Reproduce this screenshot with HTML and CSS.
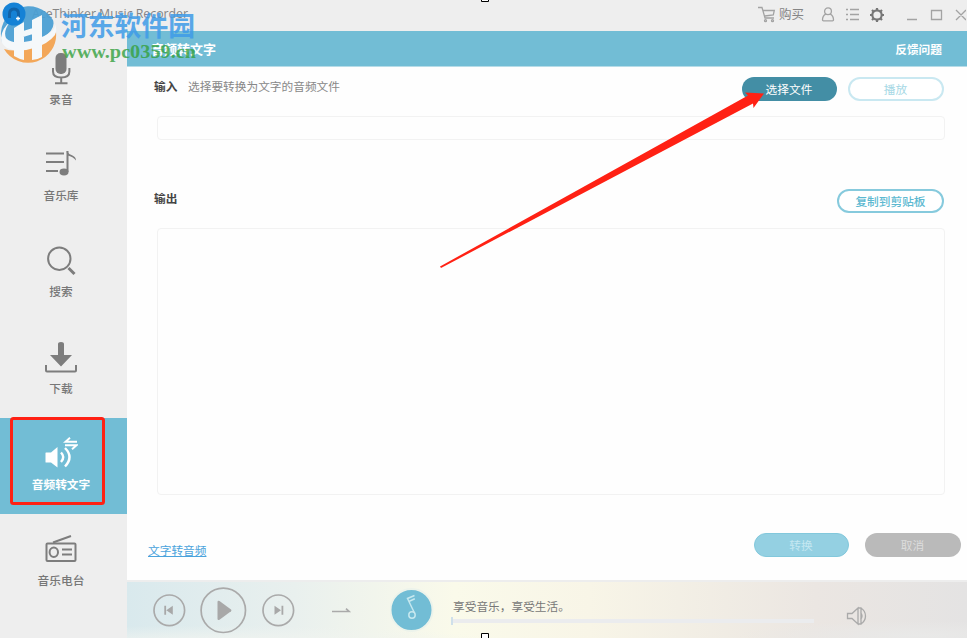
FILE: index.html
```
<!DOCTYPE html>
<html lang="zh-CN">
<head>
<meta charset="utf-8">
<title>AceThinker Music Recorder</title>
<link rel="stylesheet" href="styles.css">
</head>
<body>
<div class="app">
  <header class="titlebar">
    <span class="app-name">AceThinker Music Recorder</span>
    <div class="tools">
      <svg class="cart" width="18" height="17" viewBox="0 0 18 17"><path d="M0 1.500h4L7 12h9M5.300 4.500h11l-1 4.500-8.500 1"/><circle cx="7.500" cy="14.700" r="1"/><circle cx="14.500" cy="14.700" r="1"/></svg>
      <span class="buy">购买</span>
      <svg class="user" width="14" height="15" viewBox="0 0 14 15"><circle cx="7" cy="4.300" r="3.400"/><path d="M4.800 7.200C2.500 8.300 1.500 10 1.500 13q0 .8 1 .8h9q1 0 1-.8c0-3-1-4.700-3.300-5.800"/></svg>
      <svg class="list" width="15" height="13" viewBox="0 0 15 13"><path d="M1 1.500h2M5 1.500h9M1 6.500h2M5 6.500h9M1 11.500h2M5 11.500h9"/></svg>
      <svg class="gear" width="16" height="16" viewBox="0 0 16 16"><circle cx="8" cy="8" r="4.700"/><path d="M8 1v2M8 13v2M1 8h2M13 8h2M3 3l1.500 1.500M11.500 11.500L13 13M3 13l1.500-1.500M11.500 4.500L13 3"/></svg>
      <svg class="win" width="60" height="14" viewBox="0 0 60 14"><path d="M1 11.500h10M25.500 2.500h10v9h-10zM50 2l10 10M60 2L50 12"/></svg>
    </div>
  </header>
  <div class="body">
    <nav class="sidebar">
      <a class="item"><svg width="34" height="34" viewBox="0 0 34 34"><rect class="fill" x="11.500" y="1" width="11" height="21" rx="5"/><path d="M9 16v3.500q0 6 8.200 6t8.200-6V16M17.200 26v5M11 31.300h12.500"/></svg><span>录音</span></a>
      <a class="item"><svg width="34" height="34" viewBox="0 0 34 34"><path d="M2 5.500h18M2 14h18M2 23h12"/><ellipse class="fill" cx="20" cy="24" rx="4.500" ry="3.400"/><path d="M23.500 24V3"/><path class="fill" d="M22.500 3q2 3 6 4.500 3.500 1.500 3.500 5-3-4-8.500-5z"/></svg><span>音乐库</span></a>
      <a class="item"><svg width="34" height="34" viewBox="0 0 34 34"><circle cx="15.300" cy="14.700" r="11.200"/><path class="handle" d="M24.500 24l6 6"/></svg><span>搜索</span></a>
      <a class="item"><svg width="34" height="34" viewBox="0 0 34 34"><path class="fill" d="M14 3q0-2 3-2t3 2v11h8L17 25.500 6 14h8z"/><path d="M2 24v5.500q0 1 1 1h28q1 0 1-1V24"/></svg><span>下载</span></a>
      <a class="item active"><svg width="34" height="34" viewBox="0 0 34 34"><path class="fill" d="M2 15.500h5L13.500 10v20.500L7 25.500H2q-.5 0-.5-.5v-9q0-.5.500-.5z"/><path d="M17 15.500q4.500 4.500 0 9.500M21 11q9 9 0 18.500"/><path class="swap" d="M33 4.700H21.500l4.500-4M21 8.200h11.500l-4.500 4"/></svg><span>音频转文字</span></a>
      <a class="item"><svg width="34" height="34" viewBox="0 0 34 34"><rect x="2.500" y="10.500" width="29" height="17.500" rx="1"/><ellipse cx="9.800" cy="19.300" rx="4.200" ry="4.700"/><path d="M18 16.500h10M18 21.500h10M9 9.500L27 3"/></svg><span>音乐电台</span></a>
    </nav>
    <main class="main">
      <div class="heading"><span>音频转文字</span><span>反馈问题</span></div>
      <section class="content">
        <div class="row first">
          <b>输入</b><span class="hint">选择要转换为文字的音频文件</span>
          <button class="btn dark">选择文件</button>
          <button class="btn outline pale">播放</button>
        </div>
        <div class="field input"></div>
        <div class="row second">
          <b>输出</b>
          <button class="btn outline copy">复制到剪贴板</button>
        </div>
        <div class="field output"></div>
        <div class="row actions">
          <a class="link">文字转音频</a>
          <button class="btn convert">转换</button>
          <button class="btn cancel">取消</button>
        </div>
      </section>
      <footer class="player">
        <svg class="controls" width="240" height="56" viewBox="0 0 240 56">
          <circle cx="42.300" cy="28.300" r="15.300"/><path class="g" d="M37.300 23.800h1.800v9h-1.800zM39.300 28.300l6.500-4.500v9z"/>
          <circle cx="96.300" cy="28.300" r="22.200"/><path class="g" d="M90.500 20q0-2 2-1l11.500 8.500q1 .8 0 1.800l-11.500 8.500q-2 .8-2-1z"/>
          <circle cx="151.300" cy="28.300" r="15.300"/><path class="g" d="M154.500 23.800h1.800v9h-1.800zM154 28.300l-6.500-4.500v9z"/>
          <path d="M205 29.500h17l-3-2.800"/>
        </svg>
        <svg class="disc" width="44" height="44" viewBox="0 0 44 44"><circle cx="21.500" cy="22" r="21"/><circle cx="22" cy="27" r="3.200"/><path d="M24.500 25L17.500 10.500l7-3M18.800 13.500l6-2.700"/></svg>
        <div class="track"><span>享受音乐，享受生活。</span><div class="progress"></div></div>
        <svg class="volume" width="22" height="20" viewBox="0 0 22 20"><path d="M1.500 7.500H6l6-5.500v16l-6-5.500H1.500zM14.500 1.700q5 3 5 8.300t-5 8.300M14.500 6.500q3 3.500 0 7M12 2h3v16h-3"/></svg>
      </footer>
    </main>
  </div>
  <svg class="annotations" width="967" height="638" viewBox="0 0 967 638">
    <g opacity=".93">
      <path d="M4 49Q28 56 56 32A28 28 0 0 1 4 49z" fill="#f4a24e"/>
      <path d="M2 42A28 28 0 0 1 53 20Q56 30 42 38 22 48 8 43 4 42 2 38z" fill="#4a9fd4"/>
      <path d="M1 38Q2 28 10 22 3 31 6 38 12 45 30 41 46 37 53 30 56 27 54 22 58 29 55 35 48 44 34 48 18 53 7 48 1 44 1 38z" fill="#f6f9fb"/>
      <path d="M14 28l10-6v38q-5-1-10-4zM32 20l10-5v42q-5 3-10 3zM20 32l16-5v6l-16 5z" fill="#f6f9fb"/>
    </g>
    <circle cx="14" cy="14" r="11.500" fill="#1582d6"/>
    <path d="M9.500 18v-4q0-5 4.500-5t4.500 5v3" fill="none" stroke="#1263a8" stroke-width="3"/>
    <path d="M16 18.500h4M18 16.500v4" stroke="#fff" stroke-width="1.300"/>
    <text class="site-name" x="61" y="35.500" textLength="134" lengthAdjust="spacingAndGlyphs">河东软件园</text>
    <text class="site-url" x="62" y="58" textLength="134" lengthAdjust="spacingAndGlyphs">www.pc0359.cn</text>
    <rect x="11.500" y="418.500" width="92" height="85" rx="2" fill="none" stroke="#ff2114" stroke-width="3"/>
    <path d="M440 266.500L748 95.500 745 92.500 764 93.500 753.500 108 753 103.500 441 268z" fill="#ff2114"/>
    <path d="M481.500-5.500h7v7h-7zM481.500 633.500h7v7h-7z" fill="#fff" stroke="#000"/>
  </svg>
</div>
</body>
</html>
```
FILE: styles.css
```
* { box-sizing: border-box; }
body { margin: 0; overflow: hidden; font-family: "Noto Sans CJK SC", sans-serif; font-size: 11.700px; color: #777; }
svg { fill: none; stroke: #808080; flex: none; }
.app { position: relative; width: 967px; height: 638px; display: flex; flex-direction: column; background: #fefefe; overflow: hidden; }
.titlebar { height: 31px; flex: none; background: #eee; display: flex; align-items: center; padding: 0 0 2px 32px; }
.app-name { font: 12.300px/26px "Open Sans", sans-serif; color: #858585; margin-top: -1px; }
.tools { margin-left: auto; display: flex; align-items: center; }
.tools svg { stroke: #a3a3a3; stroke-width: 1.300; }
.buy { margin: -2px 17px 0 3px; font-size: 12.500px; color: #858585; }
.tools .list { margin: 0 9px 0 10px; }
.tools .gear { stroke: #777; stroke-width: 2.200; }
.win { margin-left: 21px; }
.tools .win { margin-right: 1px; }
.body { flex: 1; display: flex; min-height: 0; }
.sidebar { width: 127px; background: #eee; padding-top: 1.500px; flex: none; }
.item { height: 96.400px; display: flex; flex-direction: column; align-items: center; padding: 19px 5px 0 0; font-weight: 500; }
.item svg { stroke-width: 2; stroke: #7d7d7d; }
.item .fill { fill: #7d7d7d; stroke: none; }
.item .handle { stroke-width: 3; }
.item span { margin-top: 4px; line-height: 18px; }
.active { background: #72bdd5; color: #fff; font-weight: 700; }
.active svg { stroke: #fff; stroke-width: 2.400; }
.active .swap { stroke-width: 1.900; }
.active .fill { fill: #fff; }
.main { flex: 1; display: flex; flex-direction: column; min-width: 0; }
.heading { height: 36px; flex: none; background: #72bdd5; border-bottom: 1px solid #b6dce8; color: #fff; font-weight: 700; display: flex; align-items: center; justify-content: space-between; padding: 0 25px 1px 24px; }
.heading span:first-child { font-size: 13px; }
.content { flex: 1; padding: 9px 6px 0 21px; }
.row { display: flex; align-items: flex-start; }
.row b { margin-left: 6px; width: 34px; color: #444; font-weight: 700; line-height: 19px; }
.hint { line-height: 19px; color: #888; }
.btn { height: 24px; width: 95px; padding: 0; border: 0; border-radius: 12px; font: 11.700px/22px "Noto Sans CJK SC", sans-serif; color: #fff; }
.first { height: 40px; padding-right: 17.500px; }
.first .btn { margin-top: 1px; }
.dark { background: #438ea5; margin-left: auto; }
.outline { background: #fff; border: 2px solid #86cadd; color: #5db9d1; line-height: 20px; font-weight: 500; }
.pale { width: 96px; margin-left: 11px; border-color: #c9e8f1; color: #a6d8e5; font-weight: 400; }
.field { border: 1px solid #f2f2f2; border-radius: 4px; width: 788px; margin-left: 9px; background: #fefefe; }
.input { height: 24px; margin-left: 9px; }
.second { margin-top: 48px; height: 40px; padding-right: 17px; }
.copy { width: 107px; margin: 1px 0 0 auto; font-weight: 500; }
.output { height: 267px; }
.actions { margin-top: 38px; padding-right: .5px; }
.link { margin-top: 7px; color: #4aa3dc; text-decoration: underline; line-height: 20px; }
.convert { background: #94d0e2; color: #c4e7f1; margin-left: auto; border: 1px solid #82c8dc; }
.cancel { background: #bababa; color: #ddd; width: 96px; margin-left: 16px; }
.player { height: 58px; flex: none; display: flex; border-top: 2px solid #ededed; background: radial-gradient(ellipse 300px 18px at 10% 110%, #f1f4f0, transparent), radial-gradient(ellipse 180px 14px at 94% 95%, #e9e9e8, transparent), linear-gradient(90deg, #d9e9ed 0, #e9f0ee 20%, #fafaea 39%, #f8f5e7 55%, #ebe6e2 82%, #e4e3e3 100%); }
.controls { stroke-width: 1.700; }
.controls, .volume { stroke: #aaa; }
.controls .g { fill: #a8a8a8; stroke: none; }
.disc { margin: 6px 0 0 23px; stroke: #c6e8ef; stroke-width: 1.500; }
.disc circle:first-child { fill: #72bdd5; stroke: #ecf3eb; stroke-width: 2; }
.track { width: 363px; margin: 14px 0 0 17px; }
.track span { display: block; line-height: 20px; margin-left: 2px; color: #777; }
.progress { height: 4px; margin-top: 3px; background: #ebecee; position: relative; }
.progress::before { content: ""; position: absolute; left: 0; top: -2px; width: 2px; height: 8px; background: #cfe0ea; }
.volume { margin: 24px 0 0 32px; stroke-width: 1.300; }
.annotations { position: absolute; inset: 0; stroke: none; pointer-events: none; }
.site-name { font: bold 27px "Noto Sans CJK SC", sans-serif; fill: #3f9be8; opacity: .85; }
.site-url { font: bold 18px "Liberation Serif", serif; fill: #35a13e; opacity: .8; }
```
